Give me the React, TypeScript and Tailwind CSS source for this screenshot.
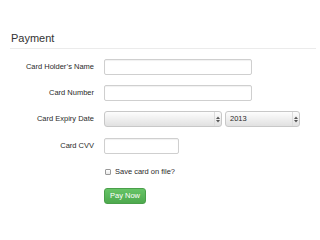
import React from "react";

const font = { fontFamily: '"Liberation Sans", Arial, sans-serif' };

function Label({ children }: { children: React.ReactNode }) {
  return (
    <div className="w-[94px] shrink-0 text-right text-[7.5px] text-[#2a2a2a]">
      {children}
    </div>
  );
}

function TextInput({ w }: { w: string }) {
  return (
    <div
      className={`${w} h-[16px] rounded-[2px] border border-[#cfcfcf] bg-white shadow-[inset_0_1px_1px_rgba(0,0,0,0.06)]`}
    />
  );
}

function Arrows() {
  return (
    <svg width="4" height="7" viewBox="0 0 4 7" className="block">
      <path d="M0 3 L2 0.5 L4 3 Z" fill="#555" />
      <path d="M0 4 L2 6.5 L4 4 Z" fill="#555" />
    </svg>
  );
}

function Select({ w, value }: { w: string; value?: string }) {
  return (
    <div
      className={`${w} h-[16px] flex items-stretch rounded-[3px] border border-[#c8c8c8] bg-gradient-to-b from-[#fdfdfd] to-[#e1e1e1]`}
    >
      <div className="flex-1 flex items-center pl-[4px] text-[7.5px] text-[#2a2a2a]">
        {value}
      </div>
      <div className="w-[7px] flex items-center justify-center border-l border-[#dcdcdc]">
        <Arrows />
      </div>
    </div>
  );
}

export default function App() {
  return (
    <div className="w-[320px] h-[240px] bg-white" style={font}>
      <div className="pt-[31px] pl-[10px] pr-[4px]">
        <h1 className="text-[11px] text-[#333] leading-[14px] pl-[1px]">Payment</h1>
        <div className="mt-[3px] h-px bg-[#ebebeb]" />
      </div>

      <div className="flex flex-col pt-[10px]">
        <div className="flex items-center gap-[10px] h-[16px]">
          <Label>Card Holder’s Name</Label>
          <TextInput w="w-[148px]" />
        </div>
        <div className="flex items-center gap-[10px] h-[16px] mt-[10px]">
          <Label>Card Number</Label>
          <TextInput w="w-[148px]" />
        </div>
        <div className="flex items-center gap-[10px] h-[16px] mt-[10px]">
          <Label>Card Expiry Date</Label>
          <div className="flex gap-[3px]">
            <Select w="w-[118px]" />
            <Select w="w-[75px]" value="2013" />
          </div>
        </div>
        <div className="flex items-center gap-[10px] h-[16px] mt-[11px]">
          <Label>Card CVV</Label>
          <TextInput w="w-[75px]" />
        </div>
        <div className="flex items-center h-[10px] mt-[13px] pl-[105px]">
          <div className="w-[6px] h-[6px] rounded-[1px] border border-[#999] bg-gradient-to-b from-white to-[#e8e8e8]" />
          <span className="ml-[4px] text-[7.5px] text-[#2a2a2a]">Save card on file?</span>
        </div>
        <div className="pl-[104px] mt-[11px]">
          <div className="w-[42px] h-[16px] flex items-center justify-center rounded-[3px] border border-[#4a9f4a] bg-gradient-to-b from-[#66c466] to-[#4ea94e] text-[7.5px] text-white">
            Pay Now
          </div>
        </div>
      </div>
    </div>
  );
}
